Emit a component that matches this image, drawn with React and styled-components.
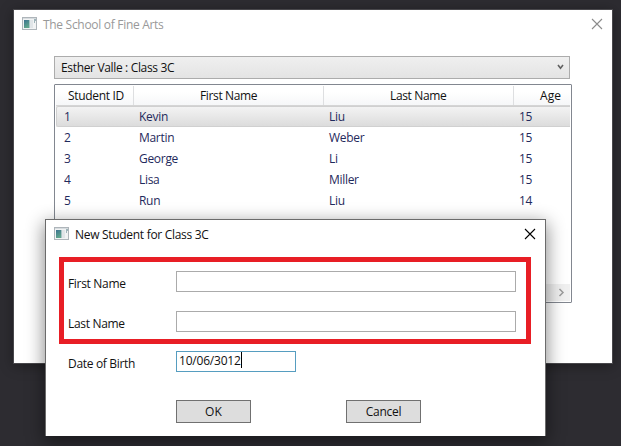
import React from 'react';
import styled, { createGlobalStyle } from 'styled-components';

const GlobalStyle = createGlobalStyle`
  *, *::before, *::after { box-sizing: border-box; }
  body {
    margin: 0;
    background: #2d2c31;
    overflow: hidden;
    font: 12px/16px "Open Sans", "Noto Sans", sans-serif;
    letter-spacing: -0.3px;
    color: #111;
  }
`;

const Desktop = styled.div`
  position: relative;
  width: 621px;
  height: 446px;
  overflow: hidden;
  background: #2d2c31;
`;

const MainWindow = styled.main`
  position: absolute;
  left: 13px;
  top: 9px;
  width: 600px;
  height: 355px;
  border: 1px solid #48474b;
  background: #fff;
  box-shadow: 0 2px 12px rgba(0, 0, 0, 0.35);
`;

const DialogWindow = styled.section`
  position: absolute;
  left: 45px;
  top: 219px;
  width: 501px;
  height: 217px;
  border: 1px solid #6b6b6b;
  border-bottom: 0;
  background: #fff;
  box-shadow: 0 5px 17px 1px rgba(0, 0, 0, 0.46);
`;

const TitleBar = styled.header`
  display: flex;
  align-items: center;
  height: 28px;
  padding: 0 9px 0 8px;
  color: ${(p) => (p.$active ? '#111' : '#999')};
`;

const TitleText = styled.h1`
  flex: 1;
  margin: 0 0 0 6px;
  padding-top: 2px;
  font: inherit;
  letter-spacing: -0.3px;
`;

const TitleIcon = styled.svg`
  flex: none;
  width: 15px;
  height: 13px;
  margin-top: -1px;
`;

const CloseIcon = styled.svg`
  flex: none;
  width: 12px;
  height: 12px;
`;

const ComboBox = styled.div`
  display: flex;
  align-items: center;
  justify-content: space-between;
  width: 516px;
  height: 23px;
  margin: 18px 0 0 40px;
  padding: 1px 5px 0 6px;
  border: 1px solid #acacac;
  background: linear-gradient(#efefef, #e4e4e4);
  letter-spacing: -0.34px;
`;

const Chevron = styled.svg`
  width: 7px;
  height: 6px;
  margin-top: -2px;
`;

const ListView = styled.div`
  display: flex;
  flex-direction: column;
  width: 518px;
  height: 219px;
  margin: 5px 0 0 40px;
  padding: 1px;
  border: 1px solid #828790;
  border-radius: 1px;
`;

const columns = '78px 190px 190px 1fr';

const HeaderRow = styled.div`
  display: grid;
  grid-template-columns: ${columns};
  height: 20px;
  border-bottom: 1px solid #d5d5d5;
  background: linear-gradient(#fff 30%, #f6f7f8);
`;

const HeaderCell = styled.div`
  height: 19px;
  padding: 2px 0 0 ${(p) => p.$indent}px;
  border-right: 1px solid ${(p) => (p.$last ? 'transparent' : '#dedfe1')};
  white-space: nowrap;
  letter-spacing: ${(p) => p.$spacing}px;
`;

const Row = styled.div`
  display: grid;
  grid-template-columns: ${columns};
  height: 21px;
  padding-top: 2px;
  border-radius: 2px 0 0 2px;
  border: 1px solid ${(p) => (p.$selected ? '#d0d0d0' : 'transparent')};
  border-right: 0;
  background: ${(p) => (p.$selected ? 'linear-gradient(#f3f3f3, #dcdcdc)' : 'none')};
  color: #1f2a5c;
`;

const Cell = styled.div`
  padding-left: ${(p) => p.$indent}px;
`;

const ScrollBar = styled.div`
  display: flex;
  align-items: center;
  justify-content: flex-end;
  height: 17px;
  margin-top: auto;
  padding-right: 5px;
  background: #f0f0f0;
`;

const ScrollArrow = styled.svg`
  width: 7px;
  height: 9px;
`;

const Highlight = styled.div`
  display: flex;
  flex-direction: column;
  gap: 19px;
  width: 472px;
  height: 87px;
  margin: 9px 0 0 13px;
  padding: 9px 0 0 4px;
  border: 5px solid #e81e25;
`;

const Field = styled.div`
  display: flex;
  height: 21px;
`;

const BirthField = styled(Field)`
  margin: 7px 0 0 22px;
`;

const Label = styled.label`
  width: 108px;
  padding-top: 5px;
  letter-spacing: -0.32px;
`;

const Input = styled.div`
  display: flex;
  align-items: flex-start;
  width: ${(p) => p.$width}px;
  height: 21px;
  padding: 1px 0 0 2px;
  border: 1px solid ${(p) => (p.$focused ? '#569dc0' : '#ababab')};
  background: #fff;
  letter-spacing: -0.2px;
`;

const Caret = styled.span`
  width: 1px;
  height: 16px;
  margin-top: -1px;
  background: #000;
`;

const Buttons = styled.div`
  display: flex;
  gap: 95px;
  margin: 28px 0 0 130px;
`;

const Button = styled.button`
  width: 75px;
  height: 23px;
  padding: 1px 0 0;
  border: 1px solid #707070;
  background: #ddd;
  color: #111;
  font: inherit;
  letter-spacing: ${(p) => p.$spacing}px;
`;

const AppIcon = () => (
  <TitleIcon viewBox="0 0 15 13">
    <defs>
      <linearGradient id="pane" x2="0.4" y2="1">
        <stop offset="0" stopColor="#3c7390" />
        <stop offset="1" stopColor="#5fa58c" />
      </linearGradient>
    </defs>
    <path d="M0 0h15v13H0z" fill="#aeb5ba" />
    <path d="M1 1h13v1H1z" fill="#d7dcdf" />
    <path d="M1 2h13v10H1z" fill="#f1f3f4" />
    <path d="M2 3h5v8H2z" fill="url(#pane)" />
    <path d="M7 3h1v8H7z" fill="#a9c5c6" />
    <path d="M8 3h3v8H8z" fill="#e0e5e8" />
    <path d="M12 2h2v2h-1v2h-1z" fill="#9eb4ba" />
  </TitleIcon>
);

const Close = ({ color }) => (
  <CloseIcon viewBox="0 0 12 12">
    <path d="M1 1l10 10M11 1L1 11" stroke={color} strokeWidth="1.1" fill="none" />
  </CloseIcon>
);

const headers = [
  { text: 'Student ID', indent: 12, spacing: -0.32 },
  { text: 'First Name', indent: 66, spacing: -0.36 },
  { text: 'Last Name', indent: 66, spacing: -0.36 },
  { text: 'Age', indent: 26, spacing: 0.1, last: true },
];

const students = [
  ['1', 'Kevin', 'Liu', '15'],
  ['2', 'Martin', 'Weber', '15'],
  ['3', 'George', 'Li', '15'],
  ['4', 'Lisa', 'Miller', '15'],
  ['5', 'Run', 'Liu', '14'],
];

const indents = [7, 4, 4, 4];

export default function App() {
  return (
    <Desktop>
      <GlobalStyle />
      <MainWindow>
        <TitleBar>
          <AppIcon />
          <TitleText>The School of Fine Arts</TitleText>
          <Close color="#8c8c8c" />
        </TitleBar>
        <ComboBox>
          Esther Valle : Class 3C
          <Chevron viewBox="0 0 7 6">
            <path d="M1 1l2.5 3.2L6 1" stroke="#606060" strokeWidth="1.6" fill="none" />
          </Chevron>
        </ComboBox>
        <ListView>
          <HeaderRow>
            {headers.map((h) => (
              <HeaderCell key={h.text} $indent={h.indent} $spacing={h.spacing} $last={h.last}>
                {h.text}
              </HeaderCell>
            ))}
          </HeaderRow>
          {students.map((student, i) => (
            <Row key={student[0]} $selected={i === 0}>
              {student.map((value, c) => (
                <Cell key={c} $indent={indents[c]}>{value}</Cell>
              ))}
            </Row>
          ))}
          <ScrollBar>
            <ScrollArrow viewBox="0 0 7 9">
              <path d="M1.5 1l3.5 3.5L1.5 8" stroke="#9b9b9b" strokeWidth="1.5" fill="none" />
            </ScrollArrow>
          </ScrollBar>
        </ListView>
      </MainWindow>
      <DialogWindow>
        <TitleBar $active>
          <AppIcon />
          <TitleText>New Student for Class 3C</TitleText>
          <Close color="#000" />
        </TitleBar>
        <Highlight>
          <Field>
            <Label>First Name</Label>
            <Input $width={340} />
          </Field>
          <Field>
            <Label>Last Name</Label>
            <Input $width={340} />
          </Field>
        </Highlight>
        <BirthField>
          <Label>Date of Birth</Label>
          <Input $width={120} $focused>
            10/06/3012
            <Caret />
          </Input>
        </BirthField>
        <Buttons>
          <Button $spacing={0.2}>OK</Button>
          <Button $spacing={-0.27}>Cancel</Button>
        </Buttons>
      </DialogWindow>
    </Desktop>
  );
}
